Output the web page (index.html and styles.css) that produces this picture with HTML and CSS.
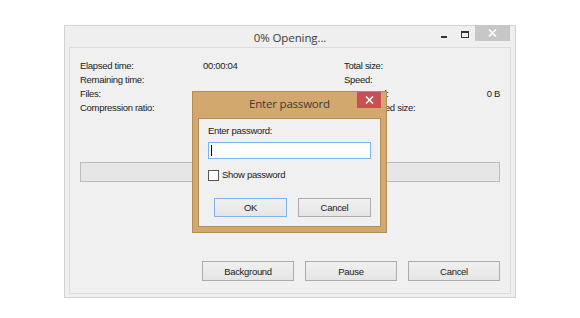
FILE: index.html
```html
<!DOCTYPE html>
<html>
<head>
<meta charset="utf-8">
<link rel="stylesheet" href="styles.css">
</head>
<body>
<div class="window">
  <div class="titlebar">
    <div class="title">0% Opening...</div>
    <div class="controls">
      <span class="min"></span>
      <span class="max"></span>
      <span class="close"><svg width="9" height="8" viewBox="0 0 9 8"><path d="M1 0.5 L8 7.5 M8 0.5 L1 7.5" stroke="#fff" stroke-width="1.6"/></svg></span>
    </div>
  </div>
  <div class="panel">
    <div class="stats">
      <span>Elapsed time:</span><span>00:00:04</span><span>Total size:</span><span class="r"></span>
      <span>Remaining time:</span><span></span><span>Speed:</span><span class="r"></span>
      <span>Files:</span><span class="num">0</span><span>Processed:</span><span class="r">0 B</span>
      <span>Compression ratio:</span><span></span><span>Compressed size:</span><span class="r"></span>
    </div>
    <div class="progress"></div>
    <div class="buttons">
      <button class="btn">Background</button>
      <button class="btn">Pause</button>
      <button class="btn">Cancel</button>
    </div>
  </div>
</div>

<div class="dialog">
  <div class="dtitlebar">
    <div class="dtitle">Enter password</div>
    <span class="dclose"><svg width="9" height="8" viewBox="0 0 9 8"><path d="M1 0.5 L8 7.5 M8 0.5 L1 7.5" stroke="#fff" stroke-width="1.6"/></svg></span>
  </div>
  <div class="dbody">
    <div class="dlabel">Enter password:</div>
    <div class="input"><span class="caret"></span></div>
    <label class="check"><span class="box"></span>Show password</label>
    <div class="dbuttons">
      <button class="btn dbtn ok">OK</button>
      <button class="btn dbtn">Cancel</button>
    </div>
  </div>
</div>
</body>
</html>
```

FILE: styles.css
```css
html, body {
  margin: 0;
  padding: 0;
  background: #ffffff;
  width: 580px;
  height: 318px;
  overflow: hidden;
  font-family: "Liberation Sans", Arial, sans-serif;
  font-size: 9.5px;
  letter-spacing: -0.3px;
  color: #1a1a1a;
}

body {
  position: relative;
  padding: 25px 0 0 64px;
  box-sizing: border-box;
}

.window {
  width: 452px;
  height: 273px;
  box-sizing: border-box;
  background: #efefef;
  border: 1px solid #d2d2d2;
  display: flex;
  flex-direction: column;
  padding: 0 4px 3px 4px;
}

.titlebar {
  height: 20px;
  position: relative;
  display: flex;
  justify-content: center;
  align-items: center;
}

.title {
  font-family: "Open Sans", "Noto Sans", sans-serif;
  font-size: 11.5px;
  letter-spacing: -0.1px;
  color: #3a3a3a;
  margin-top: 3px;
}

.controls {
  position: absolute;
  right: 1px;
  top: -1px;
  display: flex;
  align-items: flex-start;
}

.min {
  width: 6px;
  height: 2px;
  background: #333;
  margin-top: 11px;
  margin-right: 14px;
}

.max {
  width: 6px;
  height: 4px;
  border: 1px solid #333;
  border-top-width: 2px;
  margin-top: 6px;
  margin-right: 6px;
}

.close {
  width: 35px;
  height: 16px;
  background: #c7c7c7;
  display: flex;
  align-items: center;
  justify-content: center;
}

.panel {
  flex: 1;
  margin-top: 1px;
  background: #f0f0f0;
  border: 1px solid #dcdcdc;
  padding: 11px 10px 12px 10px;
  display: flex;
  flex-direction: column;
}

.stats {
  display: grid;
  grid-template-columns: 123px 141px 1fr auto;
  line-height: 14px;
}

.stats .num {
  padding-left: 30px;
}

.stats .r {
  text-align: right;
}

.progress {
  margin-top: 47px;
  height: 18px;
  background: #e6e6e6;
  border: 1px solid #bcbcbc;
}

.buttons {
  margin-top: auto;
  display: flex;
  justify-content: flex-end;
  gap: 11px;
}

.btn {
  width: 92px;
  height: 20px;
  box-sizing: border-box;
  background: linear-gradient(#f0f0f0, #e5e5e5);
  border: 1px solid #acacac;
  font-family: "Liberation Sans", Arial, sans-serif;
  font-size: 9.5px;
  letter-spacing: -0.3px;
  color: #1a1a1a;
  padding: 0;
}

.dialog {
  position: absolute;
  left: 192px;
  top: 91px;
  width: 195px;
  height: 142px;
  box-sizing: border-box;
  background: #d3a86f;
  border: 1px solid #b38d58;
  display: flex;
  flex-direction: column;
  padding: 0 5px 5px 5px;
}

.dtitlebar {
  height: 26px;
  position: relative;
  display: flex;
  justify-content: center;
  align-items: center;
}

.dtitle {
  font-family: "Open Sans", "Noto Sans", sans-serif;
  font-size: 11.5px;
  letter-spacing: -0.2px;
  color: #3a3a3a;
  margin-top: -4px;
}

.dclose {
  position: absolute;
  right: 0;
  top: 0;
  width: 24px;
  height: 16px;
  background: #c75050;
  display: flex;
  align-items: center;
  justify-content: center;
}

.dbody {
  flex: 1;
  background: #f0f0f0;
  border: 1px solid #b38d58;
  padding: 5px 9px 0 9px;
  display: flex;
  flex-direction: column;
}

.dlabel {
  line-height: 14px;
}

.input {
  margin-top: 4px;
  height: 17px;
  box-sizing: border-box;
  background: #fff;
  border: 1px solid #7eb4ea;
  position: relative;
}

.caret {
  position: absolute;
  left: 2px;
  top: 2px;
  width: 1px;
  height: 11px;
  background: #000;
}

.check {
  margin-top: 10px;
  display: flex;
  align-items: center;
  line-height: 12px;
}

.box {
  width: 9px;
  height: 9px;
  border: 1px solid #555;
  background: #fff;
  margin-right: 3px;
}

.dbuttons {
  margin-top: 17px;
  display: flex;
  gap: 11px;
  padding-left: 6px;
}

.dbtn {
  width: 73px;
  height: 19px;
}

.ok {
  border-color: #7eb4ea;
}
```
